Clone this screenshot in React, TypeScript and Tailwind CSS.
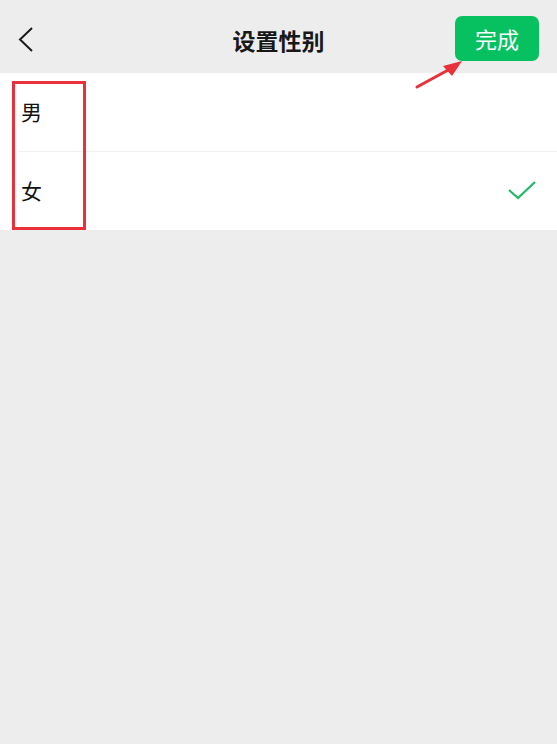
export default function App() {
  const font = { fontFamily: '"Noto Sans CJK SC", "Noto Sans", sans-serif' };
  return (
    <div className="relative min-h-[744px] w-full bg-[#ededed]" style={font}>
      {/* Header */}
      <header className="relative flex h-[73px] items-start justify-between px-[17px]">
        <svg width="18" height="28" viewBox="0 0 18 28" className="mt-[25px]">
          <path d="M15 3 L3 14.5 L15 26" fill="none" stroke="#1a1a1a" strokeWidth="2" />
        </svg>
        <h1 className="absolute left-1/2 top-[21px] -translate-x-1/2 text-[23px] font-semibold leading-[38px] text-[#181818]">
          设置性别
        </h1>
        <button className="mr-[1px] mt-[16px] flex h-[45px] w-[84px] items-center justify-center rounded-[7px] bg-[#07c160] text-[22px] text-white">
          完成
        </button>
      </header>

      {/* Options */}
      <ul className="bg-white">
        <li className="flex h-[78px] items-center px-[21px] text-[21px] text-[#111]">男</li>
        <li className="ml-[18px] h-px bg-[#f0f0f0]" />
        <li className="flex h-[78px] items-center justify-between pl-[21px] pr-[20px] text-[21px] text-[#111]">
          <span>女</span>
          <svg width="30" height="22" viewBox="0 0 30 22">
            <path d="M2 10 L11 18 L28 2" fill="none" stroke="#1fb869" strokeWidth="2.2" />
          </svg>
        </li>
      </ul>

      {/* Annotation: red box */}
      <div className="absolute left-[12px] top-[81px] h-[149px] w-[74px] border-[3px] border-[#e8313a]" />

      {/* Annotation: red arrow */}
      <svg className="absolute left-[412px] top-[56px]" width="56" height="36" viewBox="0 0 56 36">
        <path d="M5 31 L38 13" stroke="#e8313a" strokeWidth="3" strokeLinecap="round" />
        <path d="M50 5 L31 10 L40 20 Z" fill="#e8313a" />
      </svg>
    </div>
  );
}
